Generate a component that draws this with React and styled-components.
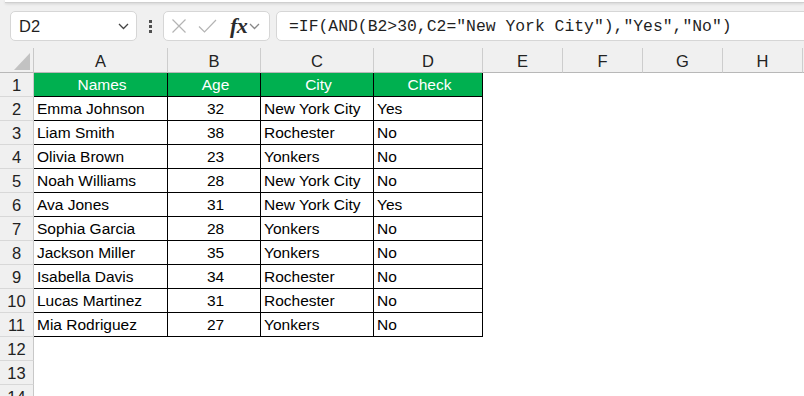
import React from 'react';
import styled, {createGlobalStyle} from 'styled-components';

const GlobalStyle = createGlobalStyle`
  html, body {
    margin: 0;
    padding: 0;
    background: #f0f0f0;
    overflow: hidden;
  }
  body {
    font-family: 'Liberation Sans', Arial, sans-serif;
  }
`;

const Page = styled.div`
  width: 804px;
  height: 396px;
  display: flex;
  flex-direction: column;
  background: #f0f0f0;
  overflow: hidden;

  & > * {
    flex-shrink: 0;
  }
`;

const TopStrip = styled.div`
  height: 2px;
  margin-left: 5px;
  background: #fff;
  border-bottom: 1px solid #cfcfcf;
  box-shadow: 0 1px 3px rgba(0, 0, 0, 0.12);
`;

const Toolbar = styled.div`
  display: flex;
  align-items: flex-start;
  height: 45px;
  padding-top: 8px;
  padding-left: 10px;
  box-sizing: border-box;
`;

const Box = styled.div`
  height: 30px;
  box-sizing: border-box;
  background: #fff;
  border: 1px solid #d6d6d6;
  border-radius: 5px;
  display: flex;
  align-items: center;
`;

const NameBox = styled(Box)`
  width: 127px;
  padding: 0 7px 0 8px;
  justify-content: space-between;
  font-size: 16.5px;
  color: #1f1f1f;
`;

const Dots = styled.div`
  width: 26px;
  height: 30px;
  display: flex;
  flex-direction: column;
  align-items: center;
  justify-content: center;
  gap: 2px;

  span {
    width: 3px;
    height: 3px;
    background: #505050;
  }
`;

const FxBox = styled(Box)`
  width: 107px;
  padding: 0 4px 0 7px;
`;

const Fx = styled.span`
  font-family: 'Liberation Serif', 'Times New Roman', serif;
  font-style: italic;
  font-weight: bold;
  font-size: 22px;
  color: #2b2b2b;
  margin-left: 13px;
  margin-right: 2px;
  line-height: 1;
  letter-spacing: -0.5px;
`;

const FormulaBox = styled(Box)`
  flex: 1;
  margin-left: 6px;
  margin-right: -10px;
  padding-left: 12px;
  font-family: 'Liberation Mono', 'Courier New', monospace;
  font-size: 16.4px;
  color: #1f1f1f;
  white-space: nowrap;
`;

const Grid = styled.div`
  display: grid;
  grid-template-columns: 34px 134px 93px 113px 109px 80px 80px 80px 80px 40px;
  grid-template-rows: 25px repeat(14, 24px);
  background: #fff;
`;

const Corner = styled.div`
  background: #f0f0f0;
  border-right: 1px solid #c8c8c8;
  border-bottom: 1px solid #b8b8b8;
  display: flex;
  align-items: flex-end;
  justify-content: flex-end;
  padding: 0 3px 2px 0;
  box-sizing: border-box;
`;

const ColHead = styled.div`
  background: #f0f0f0;
  border-right: 1px solid #cdcdcd;
  border-bottom: 1px solid #b8b8b8;
  box-sizing: border-box;
  display: flex;
  align-items: center;
  justify-content: center;
  padding-top: 2px;
  font-size: 16.5px;
  color: #222;
`;

const RowHead = styled.div`
  background: #f0f0f0;
  border-right: 1px solid #c8c8c8;
  border-bottom: 1px solid #d8d8d8;
  box-sizing: border-box;
  display: flex;
  align-items: center;
  justify-content: center;
  padding-top: 1px;
  font-size: 16.5px;
  color: #222;
`;

const Cell = styled.div`
  box-sizing: border-box;
  display: flex;
  align-items: center;
  justify-content: ${({$center}) => ($center ? 'center' : 'flex-start')};
  padding: 1px 0 0 3px;
  font-size: 15.5px;
  color: #000;
  white-space: nowrap;
  overflow: hidden;
  background: ${({$head}) => ($head ? '#00b050' : '#fff')};
  ${({$head}) => $head && 'color: #fff;'}
  border-right: ${({$table}) => ($table ? '1px solid #000' : 'none')};
  border-bottom: ${({$table}) => ($table ? '1px solid #000' : 'none')};
`;

const Icon = ({children, w = 16, h = 16, vb = '0 0 16 16', style}) => (
  <svg width={w} height={h} viewBox={vb} fill="none" style={style}>
    {children}
  </svg>
);

const Chevron = ({color = '#444'}) => (
  <Icon w={11} h={7} vb="0 0 11 7">
    <path d="M1 1l4.5 4.5L10 1" stroke={color} strokeWidth="1.3" />
  </Icon>
);

const people = [
  ['Emma Johnson', 32, 'New York City', 'Yes'],
  ['Liam Smith', 38, 'Rochester', 'No'],
  ['Olivia Brown', 23, 'Yonkers', 'No'],
  ['Noah Williams', 28, 'New York City', 'No'],
  ['Ava Jones', 31, 'New York City', 'Yes'],
  ['Sophia Garcia', 28, 'Yonkers', 'No'],
  ['Jackson Miller', 35, 'Yonkers', 'No'],
  ['Isabella Davis', 34, 'Rochester', 'No'],
  ['Lucas Martinez', 31, 'Rochester', 'No'],
  ['Mia Rodriguez', 27, 'Yonkers', 'No'],
];

const columns = ['A', 'B', 'C', 'D', 'E', 'F', 'G', 'H', ''];

const App = () => {
  const rows = [];
  for (let r = 1; r <= 14; r++) {
    let values = ['', '', '', ''];
    if (r === 1) values = ['Names', 'Age', 'City', 'Check'];
    else if (r <= 11) values = people[r - 2];
    const inTable = r <= 11;
    rows.push(
      <React.Fragment key={r}>
        <RowHead>{r}</RowHead>
        {columns.map((c, i) => (
          <Cell
            key={c + i}
            $table={inTable && i < 4}
            $head={r === 1 && i < 4}
            $center={r === 1 || i === 1}
          >
            {i < 4 ? values[i] : ''}
          </Cell>
        ))}
      </React.Fragment>
    );
  }

  return (
    <Page>
      <GlobalStyle />
      <TopStrip />
      <Toolbar>
        <NameBox>
          <span>D2</span>
          <Chevron />
        </NameBox>
        <Dots>
          <span />
          <span />
          <span />
        </Dots>
        <FxBox>
          <Icon w={16} h={16}>
            <path d="M1.5 1.5l13 13M14.5 1.5l-13 13" stroke="#b4b4b4" strokeWidth="1.2" />
          </Icon>
          <Icon w={19} h={16} vb="0 0 19 16" style={{marginLeft: 11}}>
            <path d="M1 8.5l5.5 5.5L18 2" stroke="#b4b4b4" strokeWidth="1.2" />
          </Icon>
          <Fx>fx</Fx>
          <Chevron color="#888" />
        </FxBox>
        <FormulaBox>=IF(AND(B2&gt;30,C2="New York City"),"Yes","No")</FormulaBox>
      </Toolbar>
      <Grid>
        <Corner>
          <svg width="16" height="17" viewBox="0 0 16 17">
            <path d="M16 0V17H0Z" fill="#c2c2c2" />
          </svg>
        </Corner>
        {columns.map((c, i) => (
          <ColHead key={c + i}>{c}</ColHead>
        ))}
        {rows}
      </Grid>
    </Page>
  );
};

export default App;
